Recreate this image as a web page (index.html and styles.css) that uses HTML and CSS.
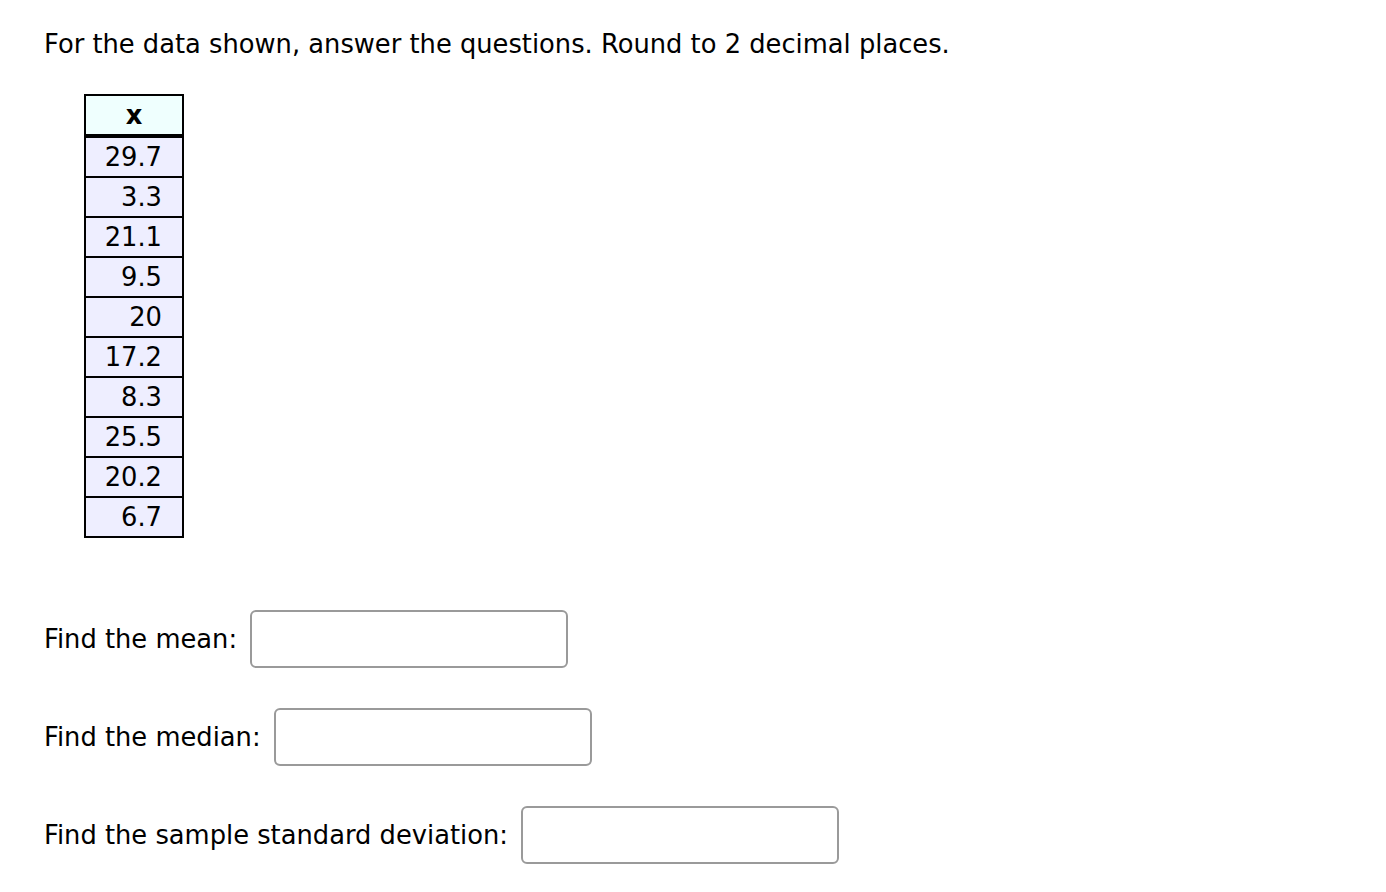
FILE: index.html
```html
<!DOCTYPE html>
<html>
<head>
<meta charset="utf-8">
<link rel="stylesheet" href="styles.css">
</head>
<body>
<div class="page">
  <p class="prompt">For the data shown, answer the questions. Round to 2 decimal places.</p>
  <table class="data">
    <thead><tr><th>x</th></tr></thead>
    <tbody>
      <tr><td>29.7</td></tr>
      <tr><td>3.3</td></tr>
      <tr><td>21.1</td></tr>
      <tr><td>9.5</td></tr>
      <tr><td>20</td></tr>
      <tr><td>17.2</td></tr>
      <tr><td>8.3</td></tr>
      <tr><td>25.5</td></tr>
      <tr><td>20.2</td></tr>
      <tr><td>6.7</td></tr>
    </tbody>
  </table>
  <div class="questions">
    <div class="q"><span class="label">Find the mean:</span><input class="answer" type="text"></div>
    <div class="q"><span class="label">Find the median:</span><input class="answer" type="text"></div>
    <div class="q"><span class="label">Find the sample standard deviation:</span><input class="answer" type="text"></div>
  </div>
</div>
</body>
</html>
```

FILE: styles.css
```css
html, body {
  margin: 0;
  padding: 0;
  background: #fff;
}
body {
  font-family: "DejaVu Sans", sans-serif;
  font-size: 25.75px;
  color: #000;
}
.page {
  padding: 26px 0 0 44px;
}
.prompt {
  margin: 0;
  line-height: 36px;
}
.data {
  margin: 32px 0 0 40px;
  border-collapse: collapse;
  border: 2px solid #000;
}
.data th {
  background: #effffe;
  font-weight: bold;
  height: 38px;
  padding: 0;
  text-align: center;
  border-bottom: 4px solid #000;
  width: 96px;
}
.data td {
  background: #eeeeff;
  border: 2px solid #000;
  height: 38px;
  padding: 0 20px 0 0;
  text-align: right;
  line-height: 36px;
}
.questions {
  margin-top: 72px;
  display: flex;
  flex-direction: column;
  gap: 40px;
}
.q {
  display: flex;
  align-items: center;
  gap: 13px;
}
.answer {
  width: 318px;
  height: 58px;
  box-sizing: border-box;
  border: 2px solid #9a9a9a;
  border-radius: 6px;
  background: #fff;
  font: inherit;
  padding: 0 8px;
}
```
